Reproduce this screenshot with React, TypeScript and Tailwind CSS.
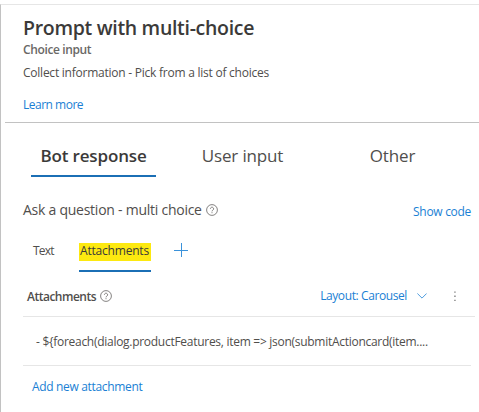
import React from "react";

function HelpIcon({ className }: { className: string }) {
  return (
    <svg viewBox="0 0 12 12" className={className} fill="none" stroke="currentColor" strokeWidth="0.7">
      <circle cx="6" cy="6" r="5.4" />
      <path d="M4.4 4.7a1.6 1.6 0 1 1 2.5 1.4c-.6.4-.9.6-.9 1.3M6 8.2v1" />
    </svg>
  );
}

function Header() {
  return (
    <header className="ml-1 flex flex-col border-b border-[#c2c2c2] pt-[9px] pb-[9px] pl-[18px]">
      <h1 className="text-[19.5px] leading-7 font-semibold tracking-[-0.31px] text-[#3b3a39]">Prompt with multi-choice</h1>
      <p className="leading-4 font-semibold tracking-[-0.38px] text-[#6a6866]">Choice input</p>
      <p className="mt-[7px] leading-4 tracking-[-0.24px]">Collect information - Pick from a list of choices</p>
      <a className="mt-4 leading-4 tracking-[-0.5px] text-[#1a7fd4]">Learn more</a>
    </header>
  );
}

function MainTabs() {
  return (
    <nav className="mt-[21px] ml-[30px] flex gap-6 text-center text-[17px] leading-6">
      <div className="w-[125px] border-b-2 border-[#1b6fb5] pb-[7px] font-semibold tracking-[-0.15px] text-[#3b3a39]">Bot response</div>
      <div className="w-[125px] tracking-[-0.15px]">User input</div>
      <div className="w-[125px] pl-[2px] tracking-[-0.1px]">Other</div>
    </nav>
  );
}

function SubTabs() {
  return (
    <div className="mt-[23px] ml-[31px] flex leading-4">
      <span className="w-[47px] pl-px tracking-[-0.8px]">Text</span>
      <div className="h-[29px] w-[72px] border-b-2 border-[#1b6fb5]">
        <div className="h-[18px] bg-[#fde910] pl-px tracking-[-0.2px] text-[#3b3a39]">Attachments</div>
      </div>
      <svg viewBox="0 0 14 14" className="ml-[23px] h-[14px] w-[14px] text-[#3b92da]" stroke="currentColor" strokeWidth="1">
        <path d="M7.5 0v14M0 7.5h14" />
      </svg>
    </div>
  );
}

export default function App() {
  return (
    <div className="h-[412px] bg-white pt-1 font-['Open_Sans',sans-serif] text-[12px] whitespace-nowrap text-[#504e4c]">
      <main className="h-[408px] overflow-hidden border-t border-l border-t-[#e6e6e6] border-l-[#c2c2c2]">
        <Header />
        <MainTabs />
        <div className="mt-[23px] mr-2 ml-[22px] flex h-5 items-start">
          <span className="text-[14px] leading-5 tracking-[-0.25px]">Ask a question - multi choice</span>
          <HelpIcon className="mt-1 ml-1 h-3 w-3" />
          <a className="mt-[2px] ml-auto leading-5 tracking-[-0.3px] text-[#1a7fd4]">Show code</a>
        </div>
        <SubTabs />
        <div className="mt-[15px] mr-1 ml-[22px] flex h-[30px] items-start border-b border-[#e6e6e6] pl-1 leading-5">
          <span className="font-semibold tracking-[-0.5px]">Attachments</span>
          <HelpIcon className="mt-[3px] ml-1 h-3 w-3" />
          <a className="ml-auto leading-[18px] tracking-[-0.4px] text-[#1a7fd4]">Layout: Carousel</a>
          <svg viewBox="0 0 10 6" className="mt-[6px] ml-[10px] h-[6px] w-[10px] text-[#3b92da]" fill="none" stroke="currentColor" strokeWidth="0.9">
            <path d="M.4.5 5 5.1 9.6.5" />
          </svg>
          <svg viewBox="0 0 2 12" className="mt-1 mr-[19px] ml-[27px] h-3 w-[2px]" fill="#777">
            <path d="M.3.5h1.3v1.3H.3zM.3 4.6h1.3v1.3H.3zM.3 8.8h1.3v1.3H.3z" />
          </svg>
        </div>
        <div className="mr-2 ml-[22px] h-[49px] border-b border-[#e6e6e6] pl-[13px] leading-[50px] tracking-[-0.28px]">
          {"- ${foreach(dialog.productFeatures, item => json(submitActioncard(item...."}
        </div>
        <a className="mt-3 ml-[31px] block leading-[18px] tracking-[-0.33px] text-[#1a7fd4]">Add new attachment</a>
      </main>
    </div>
  );
}
